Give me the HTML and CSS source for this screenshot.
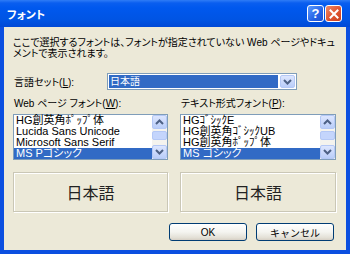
FILE: index.html
```html
<!DOCTYPE html>
<html lang="ja">
  <head>
    <meta charset="UTF-8" />
    <title>フォント</title>
    <link rel="stylesheet" href="styles.css">
  </head>
  <body>
    <div class="window">
      <!-- タイトルバー -->
      <div class="titlebar">
        <span class="title">フォント</span>
        <div class="caption-btns">
          <span class="cap-btn help">?</span>
          <span class="cap-btn close">
            <svg width="10" height="10" viewBox="0 0 10 10"><path d="M1.5 1.5 L8.5 8.5 M8.5 1.5 L1.5 8.5" stroke="#fff" stroke-width="2" stroke-linecap="square" fill="none"/></svg>
          </span>
        </div>
      </div>

      <div class="client">
        <p class="desc">ここで選択するフォントは、フォントが指定されていない Web ページやドキュ<br>メントで表示されます。</p>

        <div class="lang-row">
          <span class="lang-label">言語セット(<u>L</u>):</span>
          <div class="combo">
            <span class="combo-value">日本語</span>
            <span class="drop-btn">
              <svg width="9" height="6" viewBox="0 0 9 6"><path d="M1 1 L4.5 4.5 L8 1" stroke="#4d6185" stroke-width="2" fill="none"/></svg>
            </span>
          </div>
        </div>

        <div class="cols">
          <div class="col">
            <span class="label">Web ページ フォント(<u>W</u>):</span>
            <div class="listbox">
              <ul class="items">
                <li>HG創英角ﾎﾟｯﾌﾟ体</li>
                <li>Lucida Sans Unicode</li>
                <li>Microsoft Sans Serif</li>
                <li class="selected">MS Pゴシック</li>
              </ul>
              <div class="scrollbar">
                <span class="sb-btn"><svg width="9" height="6" viewBox="0 0 9 6"><path d="M1 5 L4.5 1.5 L8 5" stroke="#4d6185" stroke-width="2" fill="none"/></svg></span>
                <span class="sb-track"><span class="sb-thumb"></span></span>
                <span class="sb-btn"><svg width="9" height="6" viewBox="0 0 9 6"><path d="M1 1 L4.5 4.5 L8 1" stroke="#4d6185" stroke-width="2" fill="none"/></svg></span>
              </div>
            </div>
            <div class="preview">日本語</div>
          </div>

          <div class="col">
            <span class="label">テキスト形式フォント(<u>P</u>):</span>
            <div class="listbox">
              <ul class="items">
                <li>HGｺﾞｼｯｸE</li>
                <li>HG創英角ｺﾞｼｯｸUB</li>
                <li>HG創英角ﾎﾟｯﾌﾟ体</li>
                <li class="selected">MS ゴシック</li>
              </ul>
              <div class="scrollbar">
                <span class="sb-btn"><svg width="9" height="6" viewBox="0 0 9 6"><path d="M1 5 L4.5 1.5 L8 5" stroke="#4d6185" stroke-width="2" fill="none"/></svg></span>
                <span class="sb-track"><span class="sb-thumb"></span></span>
                <span class="sb-btn"><svg width="9" height="6" viewBox="0 0 9 6"><path d="M1 1 L4.5 4.5 L8 1" stroke="#4d6185" stroke-width="2" fill="none"/></svg></span>
              </div>
            </div>
            <div class="preview">日本語</div>
          </div>
        </div>

        <div class="buttons">
          <button class="btn">OK</button>
          <button class="btn">キャンセル</button>
        </div>
      </div>
    </div>
  </body>
</html>
```

FILE: styles.css
```css
body {
  margin: 0;
  font-family: "Liberation Sans", "Noto Sans CJK JP", sans-serif;
  font-size: 10px;
  font-feature-settings: "palt";
  color: #000;
}
.window {
  width: 350px;
  height: 254px;
  background: #0b4fe0;
  display: flex;
  flex-direction: column;
}
.titlebar {
  height: 27px;
  flex: none;
  display: flex;
  align-items: center;
  justify-content: space-between;
  padding: 0 8px 0 7px;
  background: linear-gradient(#2f7cf6 0, #0a5eef 3px, #0058ee 8px, #0054e3 20px, #0049d6 27px);
}
.title {
  color: #fff;
  font-weight: bold;
  font-size: 11px;
}
.caption-btns {
  display: flex;
  gap: 1px;
}
.cap-btn {
  width: 17px;
  height: 17px;
  box-sizing: border-box;
  border: 1px solid #fff;
  border-radius: 3px;
  display: flex;
  align-items: center;
  justify-content: center;
  color: #fff;
  font-weight: bold;
  font-size: 13px;
}
.help {
  background: linear-gradient(135deg, #5d9bff, #2563e6 60%, #1d50d0);
}
.close {
  background: linear-gradient(135deg, #f08a68, #e0532f 55%, #c8401e);
}
.client {
  flex: 1;
  background: #ece9d8;
  margin: 0 4px 4px;
  padding: 10px 10px 0 9px;
}
.desc {
  margin: 0;
  line-height: 11px;
}
.lang-row {
  display: flex;
  align-items: center;
  margin-top: 14px;
}
.lang-label {
  width: 94px;
  padding-left: 1px;
  box-sizing: border-box;
}
.combo {
  width: 190px;
  height: 17px;
  box-sizing: border-box;
  border: 1px solid #7f9db9;
  background: #fff;
  display: flex;
  align-items: center;
  padding: 1px;
  gap: 2px;
}
.combo-value {
  flex: 1;
  height: 100%;
  background: #316ac5;
  color: #fff;
  line-height: 13px;
  padding-left: 1px;
}
.drop-btn {
  width: 15px;
  height: 100%;
  box-sizing: border-box;
  border: 1px solid #b4c8f6;
  border-radius: 2px;
  background: linear-gradient(#dde6fe, #b9cdf9);
  display: flex;
  align-items: center;
  justify-content: center;
}
.cols {
  display: grid;
  grid-template-columns: 155px 156px;
  column-gap: 12px;
  margin-top: 8px;
}
.col {
  display: flex;
  flex-direction: column;
}
.label {
  line-height: 11px;
  padding-left: 1px;
}
.listbox {
  margin-top: 5px;
  height: 46px;
  box-sizing: border-box;
  border: 1px solid #7f9db9;
  background: #fff;
  display: flex;
}
.items {
  flex: 1;
  list-style: none;
  margin: 0;
  padding: 0;
  font-size: 11px;
}
.items li {
  height: 11px;
  line-height: 11px;
  padding-left: 2px;
  white-space: nowrap;
}
.items .selected {
  background: #316ac5;
  color: #fff;
}
.scrollbar {
  width: 15px;
  display: flex;
  flex-direction: column;
  background: #f4f3ee;
}
.sb-btn {
  height: 14px;
  box-sizing: border-box;
  border: 1px solid #b4c8f6;
  border-radius: 2px;
  background: linear-gradient(#dde6fe, #b9cdf9);
  display: flex;
  align-items: center;
  justify-content: center;
}
.sb-track {
  flex: 1;
  display: flex;
  flex-direction: column;
  padding-top: 2px;
}
.sb-thumb {
  height: 7px;
  border-radius: 2px;
  background: #c4d5fc;
  border: 1px solid #b4c8f6;
}
.preview {
  margin-top: 12px;
  height: 40px;
  box-sizing: border-box;
  border: 1px solid #cac7b6;
  box-shadow: inset 1px 1px 0 #fff, 1px 1px 0 #fff;
  display: flex;
  align-items: center;
  justify-content: center;
  font-family: "Noto Sans CJK JP", sans-serif;
  font-size: 16px;
  color: #222;
}
.buttons {
  display: flex;
  justify-content: flex-end;
  gap: 9px;
  margin-top: 11px;
  padding-right: 2px;
}
.btn {
  width: 78px;
  height: 18px;
  border: 1px solid #003c74;
  border-radius: 3px;
  background: linear-gradient(#ffffff, #f4f4f0 50%, #e3e0d6 85%, #d6d0c5);
  font-family: "Liberation Sans", "Noto Sans CJK JP", sans-serif;
  font-size: 10px;
  padding: 0;
  color: #000;
}
```
